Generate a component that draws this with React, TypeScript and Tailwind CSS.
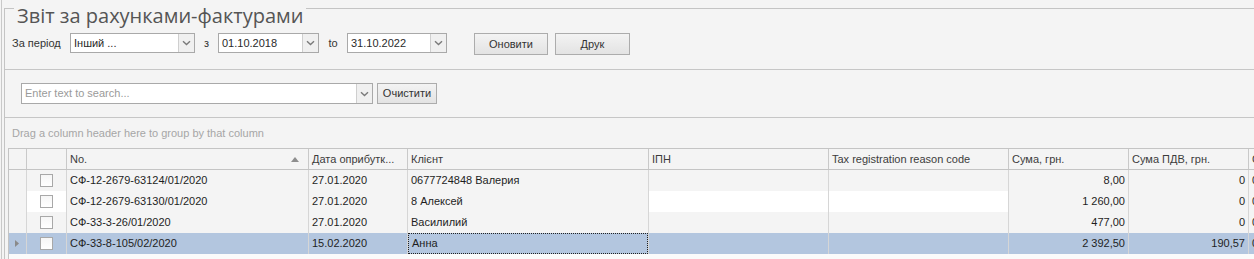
import type { ReactNode } from "react";

const ROWS = [
  { no: "СФ-12-2679-63124/01/2020", date: "27.01.2020", client: "0677724848 Валерия", sum: "8,00", vat: "0", white: false, selected: false },
  { no: "СФ-12-2679-63130/01/2020", date: "27.01.2020", client: "8 Алексей", sum: "1 260,00", vat: "0", white: true, selected: false },
  { no: "СФ-33-3-26/01/2020", date: "27.01.2020", client: "Василилий", sum: "477,00", vat: "0", white: false, selected: false },
  { no: "СФ-33-8-105/02/2020", date: "15.02.2020", client: "Анна", sum: "2 392,50", vat: "190,57", white: false, selected: true },
];

function Chevron() {
  return (
    <svg width="9" height="6" viewBox="0 0 9 6" fill="none">
      <path d="M1 1.2 L4.5 4.5 L8 1.2" stroke="#7a7a7a" strokeWidth="1.4" />
    </svg>
  );
}

function Combo({ value, width }: { value: string; width: string }) {
  return (
    <div className={`flex h-[20px] items-stretch border border-[#a9a9a9] bg-white ${width}`}>
      <div className="flex flex-1 items-center pl-[3px] text-[#2a2a2a]">{value}</div>
      <div className="flex w-[16px] items-center justify-center border-l border-[#cfcfcf] bg-[#f0f0f0]">
        <Chevron />
      </div>
    </div>
  );
}

function Button({ children, width, height }: { children: ReactNode; width: string; height: string }) {
  return (
    <div
      className={`flex items-center justify-center border border-[#acacac] bg-gradient-to-b from-[#f3f3f3] to-[#e3e3e3] text-[#333] ${width} ${height}`}
    >
      {children}
    </div>
  );
}

function Cell({
  w,
  children,
  right,
  bg,
  focus,
}: {
  w: string;
  children?: ReactNode;
  right?: boolean;
  bg: string;
  focus?: boolean;
}) {
  return (
    <div className={`flex h-full shrink-0 items-center border-r border-[#d6d6d6] ${w} ${bg}`}>
      <div
        className={`flex h-full w-full items-center truncate px-[3px] ${right ? "justify-end" : ""} ${
          focus ? "border border-dotted border-[#222]" : ""
        }`}
      >
        {children}
      </div>
    </div>
  );
}

function HeaderCell({ w, children }: { w: string; children?: ReactNode }) {
  return (
    <div className={`flex h-full shrink-0 items-center truncate border-r border-[#c9c9c9] px-[3px] ${w}`}>
      {children}
    </div>
  );
}

function Checkbox() {
  return <div className="h-[13px] w-[13px] border border-[#a8a8a8] bg-gradient-to-b from-[#f6f6f6] to-white" />;
}

export default function App() {
  return (
    <div className="h-[259px] w-[1254px] overflow-hidden bg-[#f4f4f4] pl-px font-['Liberation_Sans',Arial,sans-serif] text-[11px] text-[#1e1e1e]">
      <div className="h-full border-l border-[#c9c9c9] pl-[2px] pt-[8px]">
        <div className="flex h-full flex-col border-l border-t border-[#c4c4c4]">
          {/* filter */}
          <div className="h-[61px] shrink-0 border-b border-[#c6c6c6]">
            <div className="-mt-[6px] ml-[9px] w-fit bg-[#f4f4f4] px-[3px] font-['Open_Sans',sans-serif] text-[20px] leading-[26px] text-[#555]">
              Звіт за рахунками-фактурами
            </div>
            <div className="mt-[4px] flex items-start pl-[7px]">
              <div className="flex h-[20px] w-[58px] items-center text-[#333]">За період</div>
              <Combo value="Інший ..." width="w-[125px]" />
              <div className="flex h-[20px] w-[23px] items-center justify-center text-[#333]">з</div>
              <Combo value="01.10.2018" width="w-[101px]" />
              <div className="flex h-[20px] w-[28px] items-center justify-center text-[#333]">to</div>
              <Combo value="31.10.2022" width="w-[100px]" />
              <div className="ml-[27px]">
                <Button width="w-[74px]" height="h-[22px]">Оновити</Button>
              </div>
              <div className="ml-[7px]">
                <Button width="w-[75px]" height="h-[22px]">Друк</Button>
              </div>
            </div>
          </div>

          {/* search */}
          <div className="flex h-[48px] shrink-0 items-start border-b border-[#c6c6c6] pl-[16px] pt-[13px]">
            <div className="flex h-[21px] w-[352px] items-stretch border border-[#a9a9a9] bg-white">
              <div className="flex flex-1 items-center pl-[3px] text-[#9a9a9a]">Enter text to search...</div>
              <div className="flex w-[16px] items-center justify-center border-l border-[#cfcfcf] bg-[#f0f0f0]">
                <Chevron />
              </div>
            </div>
            <div className="ml-[4px]">
              <Button width="w-[60px]" height="h-[21px]">Очистити</Button>
            </div>
          </div>

          {/* group panel */}
          <div className="flex h-[30px] shrink-0 items-center pl-[7px] text-[#a6a6a6]">
            Drag a column header here to group by that column
          </div>

          {/* grid */}
          <div className="ml-[3px] flex flex-1 flex-col border-l border-t border-[#c4c4c4] bg-[#fbfbfb]">
            <div className="flex h-[21px] shrink-0 border-b border-[#c4c4c4] bg-[#f4f4f4] text-[#3c3c3c]">
              <HeaderCell w="w-[18px]" />
              <HeaderCell w="w-[40px]" />
              <HeaderCell w="w-[242px]">
                <div className="flex w-full items-center justify-between pr-[6px]">
                  <span>No.</span>
                  <svg width="8" height="5" viewBox="0 0 8 5">
                    <path d="M0 5 L4 0 L8 5 Z" fill="#8e8e8e" />
                  </svg>
                </div>
              </HeaderCell>
              <HeaderCell w="w-[99px]">Дата оприбутк...</HeaderCell>
              <HeaderCell w="w-[241px]">Клієнт</HeaderCell>
              <HeaderCell w="w-[180px]">ІПН</HeaderCell>
              <HeaderCell w="w-[180px]">Tax registration reason code</HeaderCell>
              <HeaderCell w="w-[120px]">Сума, грн.</HeaderCell>
              <HeaderCell w="w-[120px]">Сума ПДВ, грн.</HeaderCell>
              <HeaderCell w="w-[60px]">Сума</HeaderCell>
            </div>
            {ROWS.map((r) => {
              const gray = r.selected ? "bg-[#b3c6df]" : "bg-[#f4f4f4]";
              const alt = r.selected ? "bg-[#b3c6df]" : r.white ? "bg-white" : "bg-[#f4f4f4]";
              return (
                <div key={r.no} className="flex h-[21px] shrink-0">
                  <Cell w="w-[18px]" bg={gray}>
                    {r.selected && (
                      <svg width="5" height="7" viewBox="0 0 5 7" className="ml-[3px]">
                        <path d="M0 0 L4 3.5 L0 7 Z" fill="#8a8a8a" />
                      </svg>
                    )}
                  </Cell>
                  <div className={`flex h-full w-[40px] shrink-0 items-center justify-center border-r border-[#d6d6d6] ${alt}`}>
                    <Checkbox />
                  </div>
                  <Cell w="w-[242px]" bg={gray}>{r.no}</Cell>
                  <Cell w="w-[99px]" bg={gray}>{r.date}</Cell>
                  <Cell w="w-[241px]" bg={gray} focus={r.selected}>{r.client}</Cell>
                  <Cell w="w-[180px]" bg={alt} />
                  <Cell w="w-[180px]" bg={alt} />
                  <Cell w="w-[120px]" bg={gray} right>{r.sum}</Cell>
                  <Cell w="w-[120px]" bg={gray} right>{r.vat}</Cell>
                  <Cell w="w-[60px]" bg={gray}>0</Cell>
                </div>
              );
            })}
          </div>
        </div>
      </div>
    </div>
  );
}
